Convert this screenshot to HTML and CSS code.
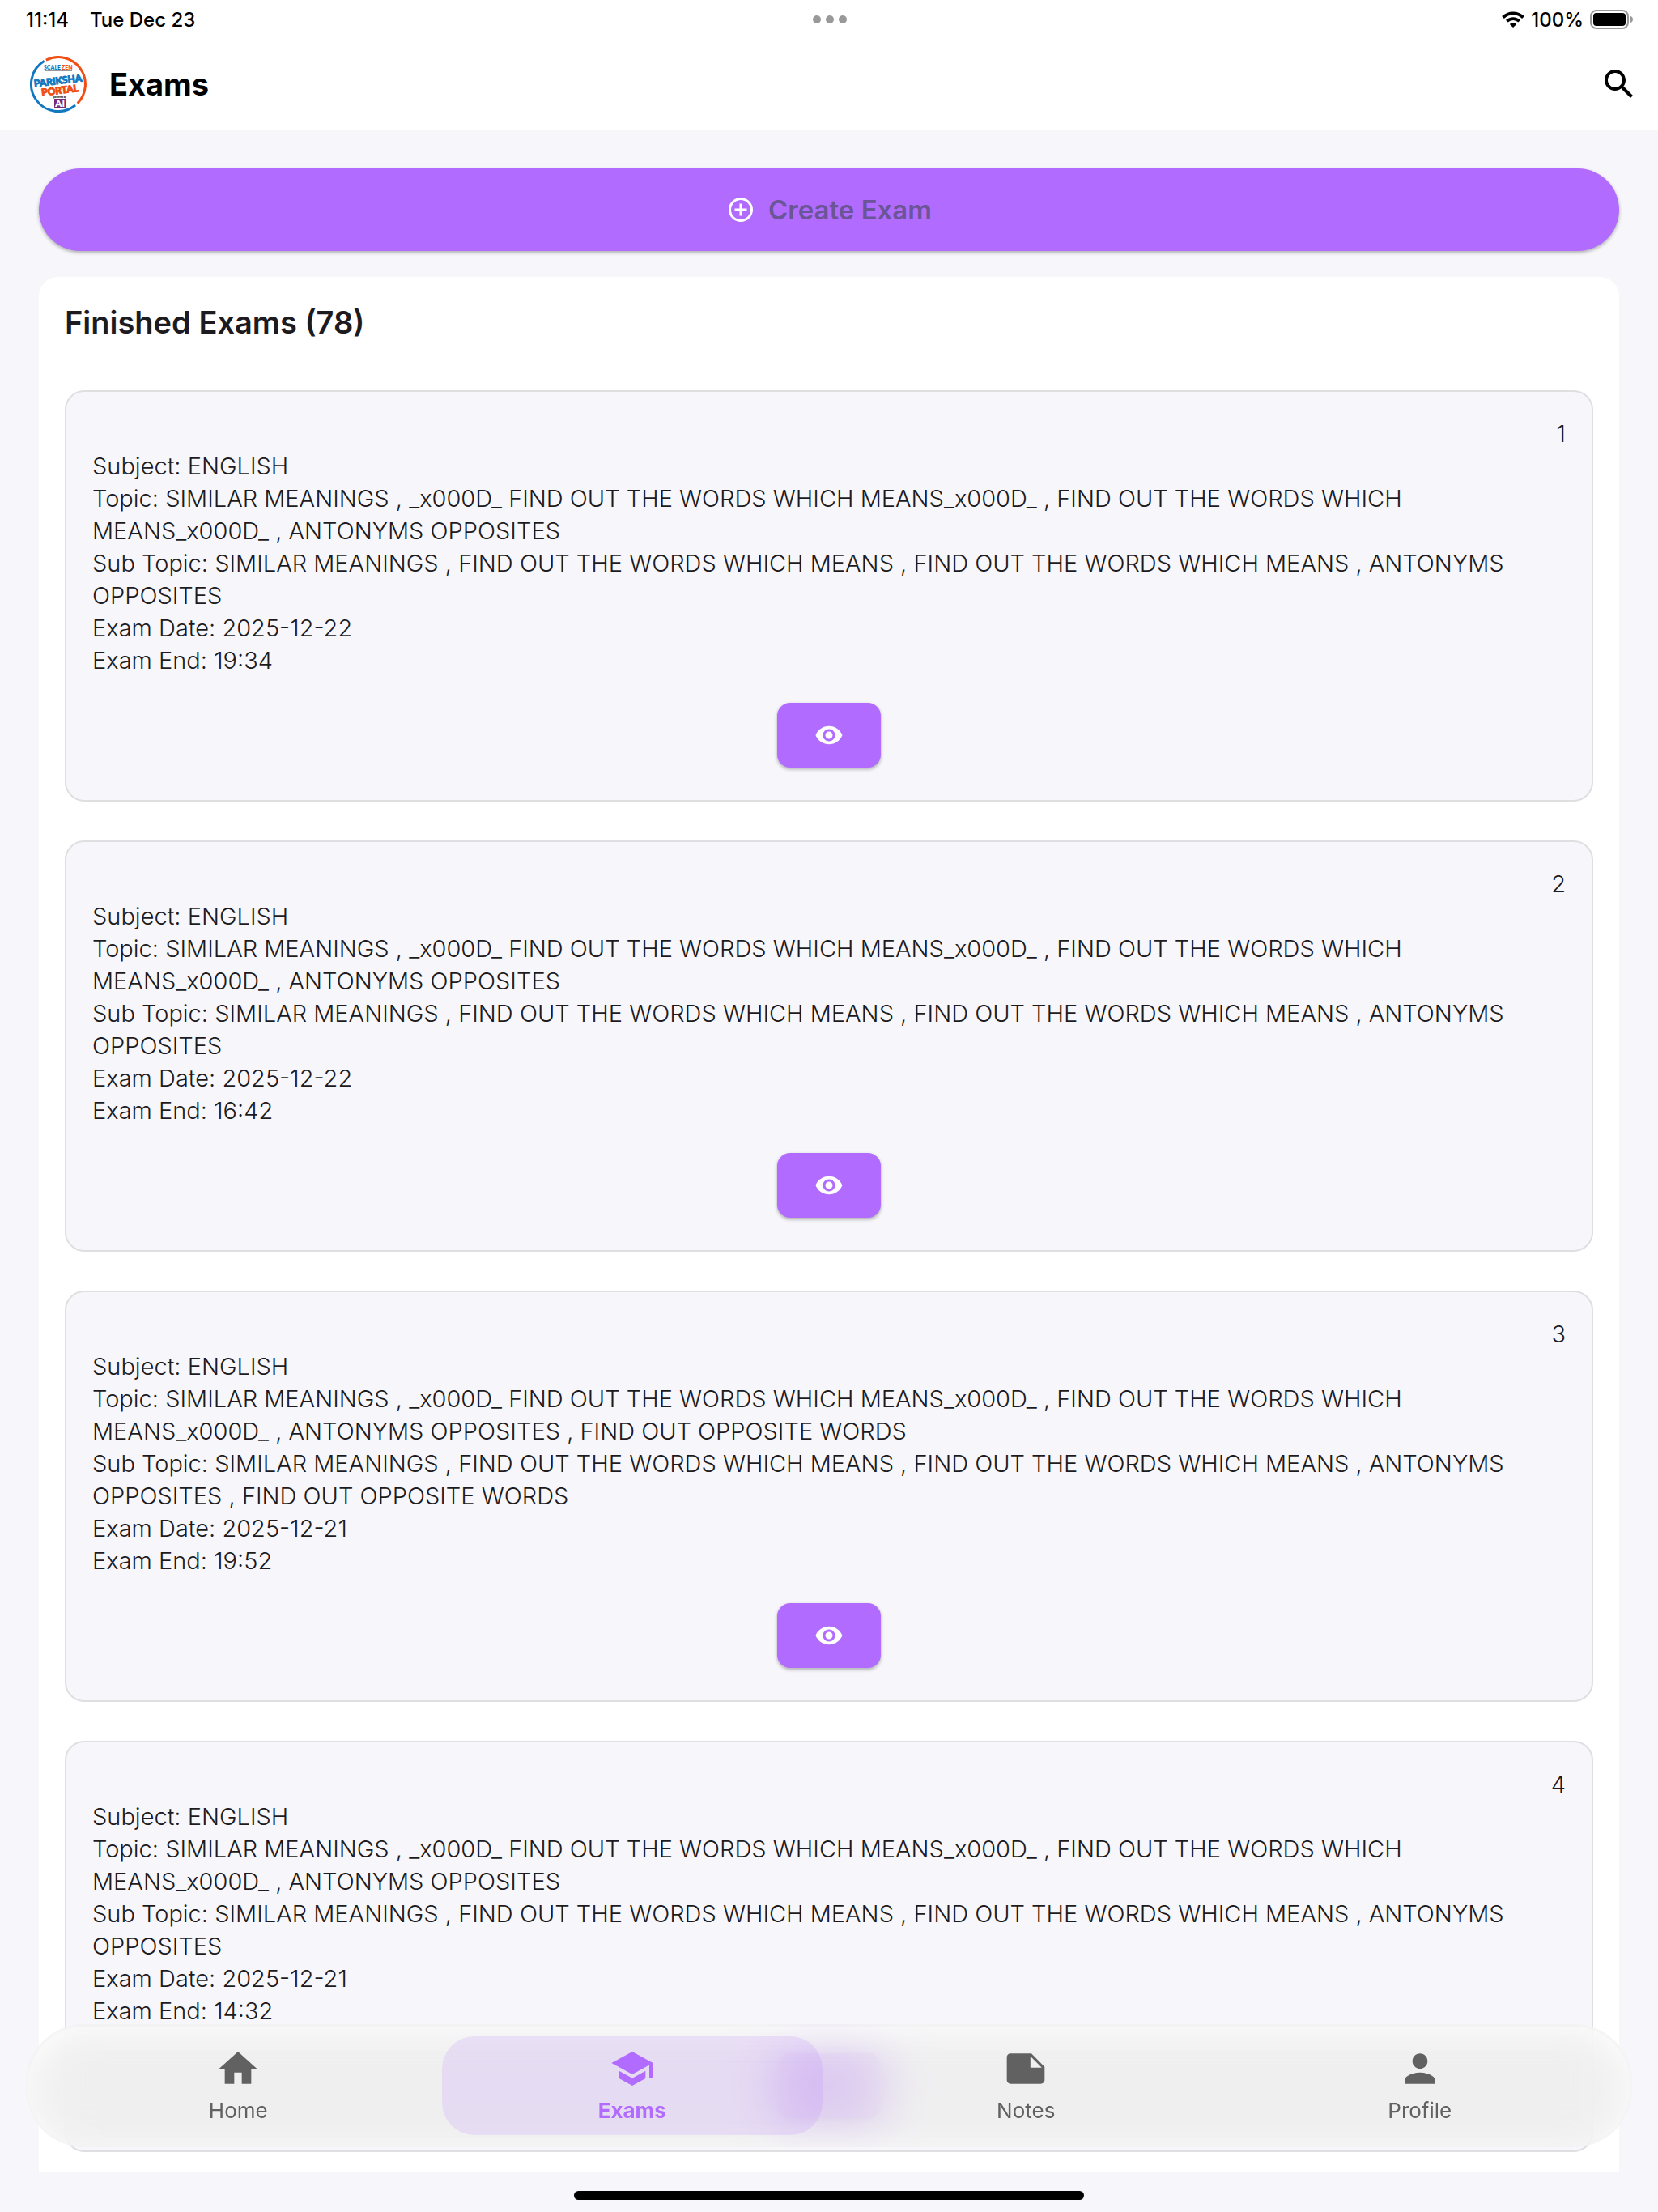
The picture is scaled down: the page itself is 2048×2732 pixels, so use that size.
FILE: index.html
```html
<!DOCTYPE html>
<html lang="en">
<head>
  <meta charset="UTF-8" />
  <meta name="viewport" content="width=device-width, initial-scale=1.0"/>
  <title>Exams</title>
  <link rel="stylesheet" href="styles.css">
</head>
<body>
  <!-- shared icons -->
  <svg class="sprite" aria-hidden="true">
    <symbol id="icon-eye" viewBox="0 0 24 24">
      <path d="M12 4.5C7 4.5 2.73 7.61 1 12c1.73 4.39 6 7.5 11 7.5s9.27-3.11 11-7.5c-1.73-4.39-6-7.5-11-7.5zM12 17c-2.76 0-5-2.24-5-5s2.24-5 5-5 5 2.24 5 5-2.24 5-5 5zm0-8c-1.66 0-3 1.34-3 3s1.34 3 3 3 3-1.34 3-3-1.34-3-3-3z"/>
    </symbol>
  </svg>

  <div class="app">
    <header class="header">
      <div class="status-bar">
        <div class="status-left">
          <span>11:14</span>
          <span>Tue Dec 23</span>
        </div>
        <div class="status-dots"><i></i><i></i><i></i></div>
        <div class="status-right">
          <svg class="wifi" viewBox="0 0 28 20">
            <path d="M1.5 7.5C8.5 .8 19.5 .8 26.5 7.5" fill="none" stroke="#000" stroke-width="4"/>
            <path d="M6.3 12.2C10.8 8 17.2 8 21.7 12.2" fill="none" stroke="#000" stroke-width="3.8"/>
            <path d="M9.8 16C12.3 13.7 15.7 13.7 18.2 16L14 20z"/>
          </svg>
          <span>100%</span>
          <svg class="battery" viewBox="0 0 54 24">
            <rect x="1" y="1" width="46" height="22" rx="7" fill="none" stroke="#999" stroke-width="2"/>
            <rect x="4" y="4" width="40" height="16" rx="4"/>
            <path d="M50 8c4 1 4 7 0 8z" fill="#999"/>
          </svg>
        </div>
      </div>
      <div class="app-bar">
        <svg class="logo" viewBox="0 0 70 70" role="img" aria-label="Pariksha Portal">
          <path d="M19.8 5.2A33.5 33.5 0 0 1 58.7 58.7" fill="none" stroke="#f04e12" stroke-width="3"/>
          <path d="M56.1 61A33.5 33.5 0 1 1 17.7 6.3" fill="none" stroke="#1278c0" stroke-width="3"/>
          <text class="logo-scale" x="17" y="17"><tspan fill="#1278c0">SCALE</tspan><tspan fill="#f04e12" dx="1">ZEN</tspan></text>
          <path d="M18 18.5H52" stroke="#999" stroke-width="1"/>
          <g transform="rotate(-7 35 35)">
            <text class="logo-name" x="35" y="35" fill="#1278c0" stroke="#1278c0">PARIKSHA</text>
            <text class="logo-name" x="36" y="47" fill="#f04e12" stroke="#f04e12">PORTAL</text>
          </g>
          <text class="logo-powered" x="37" y="52">powered by</text>
          <rect x="30" y="53" width="14" height="12" fill="#7a2a78"/>
          <text class="logo-ai" x="37" y="63">AI</text>
        </svg>
        <h1>Exams</h1>
        <button class="search" type="button" aria-label="Search">
          <svg viewBox="0 0 24 24"><path d="M15.5 14h-.79l-.28-.27C15.41 12.59 16 11.11 16 9.5 16 5.91 13.09 3 9.5 3S3 5.91 3 9.5 5.91 16 9.5 16c1.61 0 3.09-.59 4.23-1.57l.27.28v.79l5 4.99L20.49 19l-4.99-5zm-6 0C7.01 14 5 11.99 5 9.5S7.01 5 9.5 5 14 7.01 14 9.5 11.99 14 9.5 14z"/></svg>
        </button>
      </div>
    </header>

    <main class="content">
      <button class="create" type="button">
        <svg viewBox="0 0 24 24"><path d="M13 7h-2v4H7v2h4v4h2v-4h4v-2h-4V7zm-1-5C6.48 2 2 6.48 2 12s4.48 10 10 10 10-4.48 10-10S17.52 2 12 2zm0 18c-4.41 0-8-3.59-8-8s3.59-8 8-8 8 3.59 8 8-3.59 8-8 8z"/></svg>
        Create Exam
      </button>

      <section class="panel">
        <h2>Finished Exams (78)</h2>

        <article class="card">
          <span class="number">1</span>
          <p>Subject: ENGLISH</p>
          <p>Topic: SIMILAR MEANINGS , _x000D_ FIND OUT THE WORDS WHICH MEANS_x000D_ , FIND OUT THE WORDS WHICH MEANS_x000D_ , ANTONYMS OPPOSITES</p>
          <p>Sub Topic: SIMILAR MEANINGS , FIND OUT THE WORDS WHICH MEANS , FIND OUT THE WORDS WHICH MEANS , ANTONYMS OPPOSITES</p>
          <p>Exam Date: 2025-12-22</p>
          <p>Exam End: 19:34</p>
          <button class="view" type="button" aria-label="View exam 1"><svg><use href="#icon-eye"/></svg></button>
        </article>

        <article class="card">
          <span class="number">2</span>
          <p>Subject: ENGLISH</p>
          <p>Topic: SIMILAR MEANINGS , _x000D_ FIND OUT THE WORDS WHICH MEANS_x000D_ , FIND OUT THE WORDS WHICH MEANS_x000D_ , ANTONYMS OPPOSITES</p>
          <p>Sub Topic: SIMILAR MEANINGS , FIND OUT THE WORDS WHICH MEANS , FIND OUT THE WORDS WHICH MEANS , ANTONYMS OPPOSITES</p>
          <p>Exam Date: 2025-12-22</p>
          <p>Exam End: 16:42</p>
          <button class="view" type="button" aria-label="View exam 2"><svg><use href="#icon-eye"/></svg></button>
        </article>

        <article class="card">
          <span class="number">3</span>
          <p>Subject: ENGLISH</p>
          <p>Topic: SIMILAR MEANINGS , _x000D_ FIND OUT THE WORDS WHICH MEANS_x000D_ , FIND OUT THE WORDS WHICH MEANS_x000D_ , ANTONYMS OPPOSITES , FIND OUT OPPOSITE WORDS</p>
          <p>Sub Topic: SIMILAR MEANINGS , FIND OUT THE WORDS WHICH MEANS , FIND OUT THE WORDS WHICH MEANS , ANTONYMS OPPOSITES , FIND OUT OPPOSITE WORDS</p>
          <p>Exam Date: 2025-12-21</p>
          <p>Exam End: 19:52</p>
          <button class="view" type="button" aria-label="View exam 3"><svg><use href="#icon-eye"/></svg></button>
        </article>

        <article class="card">
          <span class="number">4</span>
          <p>Subject: ENGLISH</p>
          <p>Topic: SIMILAR MEANINGS , _x000D_ FIND OUT THE WORDS WHICH MEANS_x000D_ , FIND OUT THE WORDS WHICH MEANS_x000D_ , ANTONYMS OPPOSITES</p>
          <p>Sub Topic: SIMILAR MEANINGS , FIND OUT THE WORDS WHICH MEANS , FIND OUT THE WORDS WHICH MEANS , ANTONYMS OPPOSITES</p>
          <p>Exam Date: 2025-12-21</p>
          <p>Exam End: 14:32</p>
          <button class="view" type="button" aria-label="View exam 4"><svg><use href="#icon-eye"/></svg></button>
        </article>
      </section>
    </main>

    <div class="home-area"><div class="home-indicator"></div></div>

    <nav class="tabs">
      <a href="#home">
        <svg viewBox="0 0 24 24"><path d="M10 20v-6h4v6h5v-8h3L12 3 2 12h3v8z"/></svg>
        Home
      </a>
      <a href="#exams" class="active">
        <svg viewBox="0 0 24 24"><path d="M5 13.18v4L12 21l7-3.82v-4L12 17l-7-3.82zM12 3L1 9l11 6 9-4.91V17h2V9L12 3z"/></svg>
        Exams
      </a>
      <a href="#notes">
        <svg viewBox="0 0 24 24"><path d="M15 4H4c-1.1 0-2 .9-2 2v12c0 1.1.9 2 2 2h16c1.1 0 2-.9 2-2v-7L15 4zm-.5 1.500l6 6h-6z" fill-rule="evenodd"/></svg>
        Notes
      </a>
      <a href="#profile">
        <svg viewBox="0 0 24 24"><path d="M12 12c2.21 0 4-1.79 4-4s-1.79-4-4-4-4 1.79-4 4 1.79 4 4 4zm0 2c-2.67 0-8 1.34-8 4v2h16v-2c0-2.66-5.33-4-8-4z"/></svg>
        Profile
      </a>
    </nav>
  </div>
</body>
</html>
```
FILE: styles.css
```css
* {
  box-sizing: border-box;
}
body {
  margin: 0;
  font-family: Inter, "Liberation Sans", sans-serif;
  background: #f6f6fb;
  color: #1d1b20;
}
h1, h2, p {
  margin: 0;
}
button {
  border: none;
  padding: 0;
  font-family: inherit;
  cursor: pointer;
}
.sprite {
  display: none;
}
.app {
  position: relative;
  height: 100vh;
  display: flex;
  flex-direction: column;
  overflow: hidden;
}

/* header */
.header {
  background: white;
  color: black;
}
.status-bar {
  height: 48px;
  padding: 0 30px 0 32px;
  display: grid;
  grid-template-columns: 1fr auto 1fr;
  align-items: center;
  font-size: 24px;
  font-weight: 500;
}
.status-left, .status-right {
  display: flex;
  align-items: center;
}
.status-left {
  gap: 26px;
}
.status-right {
  justify-content: flex-end;
  gap: 8px;
}
.status-dots {
  display: flex;
  gap: 6px;
}
.status-dots i {
  width: 10px;
  height: 10px;
  border-radius: 50%;
  background: #999;
}
.wifi {
  width: 28px;
  height: 20px;
}
.battery {
  width: 54px;
  height: 24px;
}
.app-bar {
  height: 112px;
  padding: 0 24px 0 37px;
  display: flex;
  align-items: center;
}
.logo {
  width: 70px;
  height: 70px;
  margin-right: 28px;
}
.logo text {
  font-family: Lato, Inter, sans-serif;
  font-weight: 900;
}
.logo-scale {
  font-size: 7px;
}
.logo-name {
  font-size: 12px;
  text-anchor: middle;
}
.logo-powered {
  font-size: 3px;
  text-anchor: middle;
}
.logo-ai {
  font-size: 12px;
  fill: white;
  text-anchor: middle;
}
h1 {
  flex: 1;
  font-size: 38px;
  font-weight: 700;
}
.search {
  width: 48px;
  height: 48px;
  background: none;
}

/* content */
.content {
  flex: 1;
  min-height: 0;
  overflow: hidden;
  padding: 48px 48px 0;
}
.create {
  width: 100%;
  height: 102px;
  margin-bottom: 32px;
  display: flex;
  align-items: center;
  justify-content: center;
  gap: 16px;
  border-radius: 51px;
  background: #b16cff;
  color: #6b5596;
  font-size: 33px;
  font-weight: 600;
  box-shadow: 0 2px 4px rgba(0, 0, 0, 0.3);
}
.create svg {
  width: 36px;
  height: 36px;
  fill: white;
}
.panel {
  padding: 32px 32px 48px;
  background: white;
  border-radius: 24px;
}
h2 {
  margin-bottom: 60px;
  font-size: 38px;
  line-height: 48px;
  font-weight: 600;
}
.card {
  display: flex;
  flex-direction: column;
  padding: 32px 32px 40px;
  border: 2px solid #dfdfe1;
  border-radius: 24px;
  background: #f6f6fb;
  font-size: 29px;
  font-weight: 300;
  line-height: 40px;
}
.card + .card {
  margin-top: 48px;
}
.number {
  align-self: flex-end;
}
.view {
  align-self: center;
  width: 128px;
  height: 80px;
  margin-top: 32px;
  display: flex;
  align-items: center;
  justify-content: center;
  border-radius: 16px;
  background: #b16cff;
  box-shadow: 0 2px 4px rgba(0, 0, 0, 0.3);
}
.view svg {
  width: 36px;
  height: 36px;
  fill: white;
}

/* bottom navigation floats over the list */
.tabs {
  position: absolute;
  left: 32px;
  right: 32px;
  bottom: 80px;
  display: flex;
  gap: 16px;
  padding: 12px 24px;
  border: 3px solid rgba(255, 255, 255, 0.3);
  border-radius: 72px;
  background: rgba(235, 235, 234, 0.65);
  box-shadow: inset 0 8px 40px rgba(255, 255, 255, 0.8);
  backdrop-filter: blur(32px);
}
.tabs a {
  flex: 1;
  height: 122px;
  padding-top: 12px;
  display: flex;
  flex-direction: column;
  align-items: center;
  gap: 8px;
  border-radius: 40px;
  color: #616161;
  font-size: 26px;
  line-height: 32px;
  text-decoration: none;
}
.tabs svg {
  width: 56px;
  height: 56px;
  fill: currentColor;
}
.tabs .active {
  background: rgba(177, 108, 255, 0.15);
  color: #b16cff;
  font-weight: 700;
}
.home-area {
  height: 50px;
  padding-top: 24px;
}
.home-indicator {
  width: 630px;
  max-width: 60%;
  height: 11px;
  margin: 0 auto;
  border-radius: 6px;
  background: black;
}
```
